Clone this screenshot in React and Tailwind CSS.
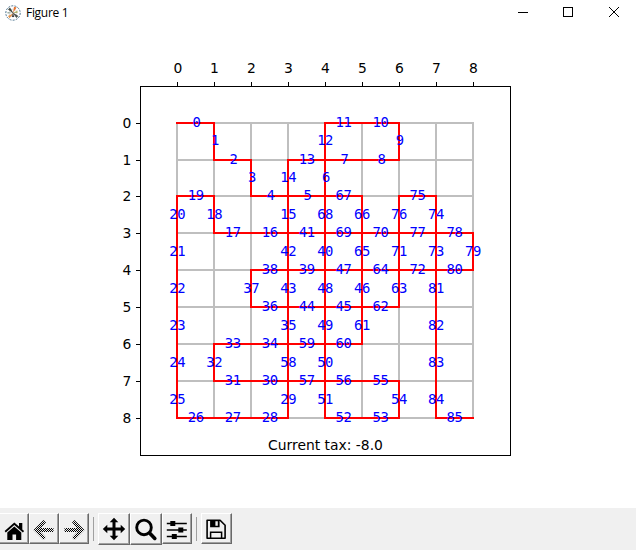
import React from "react";

const STEPS =
  "RDRDRRURRULLDLDDLLUL" + "DDDDDDRRRULLURRULURR" + "ULDDRRULDDDDRRULLLUR" + "RURULUULDRRDRUULDRRDLDDDDR";
const MOVES = { R: [1, 0], L: [-1, 0], U: [0, -1], D: [0, 1] };
const XS = [177, 214, 251, 288, 325, 362, 399, 436, 473];
const YS = [123, 160, 196, 233, 270, 307, 344, 381, 418];

const points = [[0, 0]];
for (const step of STEPS) {
  const [x, y] = points[points.length - 1];
  const [dx, dy] = MOVES[step];
  points.push([x + dx, y + dy]);
}

const labels = STEPS.split("").map((step, i) => {
  const [x1, y1] = points[i];
  const [x2, y2] = points[i + 1];
  const x = (i < 10 ? 178.1 : 177.3) + 18.48 * (x1 + x2);
  const y = y1 === y2 ? YS[y1] + 4 : Math.round(145 + 36.95 * Math.min(y1, y2));
  return { n: i, x, y };
});

function Plot() {
  return (
    <svg width="636" height="482" viewBox="0 26 636 482" className="block">
      <g stroke="#bfbfbf" strokeWidth="2" strokeLinecap="square" shapeRendering="crispEdges">
        {XS.map((x) => <line key={x} x1={x} x2={x} y1="123" y2="418" />)}
        {YS.map((y) => <line key={y} x1="177" x2="473" y1={y} y2={y} />)}
      </g>
      <polyline
        points={points.map(([x, y]) => `${XS[x]},${YS[y]}`).join(" ")}
        fill="none" stroke="#f00" strokeWidth="2" strokeLinecap="square" shapeRendering="crispEdges"
      />
      <rect x="140.5" y="86.5" width="370" height="369" fill="none" stroke="#000" shapeRendering="crispEdges" />
      <g stroke="#000" shapeRendering="crispEdges">
        {XS.map((x) => <line key={x} x1={x + 0.5} x2={x + 0.5} y1="82" y2="86" />)}
        {YS.map((y) => <line key={y} x1="136" x2="140" y1={y + 0.5} y2={y + 0.5} />)}
      </g>
      <g className="font-['DejaVu_Sans',sans-serif] text-[13.89px]" textAnchor="middle">
        {XS.map((x, i) => <text key={x} x={i === 0 ? x + 1 : x + 0.3} y="73">{i}</text>)}
        {YS.map((y, i) => <text key={y} x="127" y={y + 5}>{i}</text>)}
        <text x="325.5" y="450">Current tax: -8.0</text>
      </g>
      <g className="font-['DejaVu_Sans_Mono',monospace] text-[13.89px] tracking-[-0.36px]" textAnchor="middle" fill="#00f">
        {labels.map((l) => <text key={l.n} x={l.x} y={l.y}>{l.n}</text>)}
      </g>
    </svg>
  );
}

function Logo() {
  return (
    <svg width="16" height="16" viewBox="0 0 16 16">
      <circle cx="8" cy="8" r="7.2" fill="#fff" stroke="#4f7590" strokeWidth="1" strokeDasharray="2 1.2" />
      <circle cx="8" cy="8" r="4" fill="none" stroke="#c4c8ca" strokeWidth=".6" />
      <path d="M9 9 3 4.5l2-2z" fill="#444a42" />
      <path d="M8 8 9 1.8l2.6.8z" fill="#e7742f" />
      <path d="M7 7 13.4 11l-2 2z" fill="#4b524d" />
      <path d="M9 8 3 11l1.5 2.2z" fill="#e3924a" />
      <path d="M8 8 12.5 5.5V8z" fill="#b0b470" />
      <path d="M8 8 2.5 8.5V7z" fill="#90a496" />
      <path d="M8 7 7 12h2z" fill="#333" />
    </svg>
  );
}

function ToolButton({ size, children }) {
  return (
    <div className={`${size} flex shrink-0 items-center justify-center border border-t-white border-l-white border-r-[#696969] border-b-[#696969] bg-[#f0f0f0] shadow-[inset_-1px_-1px_0_#a0a0a0]`}>
      <svg width="24" height="24" viewBox="0 0 24 24" className="block shrink-0">{children}</svg>
    </div>
  );
}

const ARROW = "M11.5 3 14 5.5 8.8 11H21.5v4H8.8L14 20.5 11.5 23 1.5 13z";

export default function App() {
  return (
    <div className="flex h-[550px] w-[636px] flex-col overflow-hidden bg-white text-black">
      <header className="flex h-[26px] items-center pl-[5px]">
        <Logo />
        <span className="ml-[5px] flex-1 font-['Open_Sans',sans-serif] text-[12px] leading-[26px] tracking-[-0.3px]">Figure 1</span>
        <svg width="136" height="26" viewBox="0 0 136 26" fill="none" stroke="#000" shapeRendering="crispEdges">
          <path d="M18 12.5h10M63.5 7.5h9v9h-9z" />
          <path d="m109 7 10 10M119 7l-10 10" shapeRendering="auto" />
        </svg>
      </header>
      <Plot />
      <footer className="flex h-[42px] items-start bg-[#f0f0f0] pt-[5px]">
        <ToolButton size="-ml-[2px] h-[31px] w-[31px] pt-px">
          <g transform="translate(.3 1.6)">
            <path d="M2.3 12.4 12 4l4.7 4V4.5H20v6.4l1.8 1.6-1.2 1.3L12 6.5l-8.5 7.3z" />
            <path d="M5 13.8 12 8l7 5.8v7.5h-5.2v-5.4h-3.6v5.4H5z" />
          </g>
        </ToolButton>
        <ToolButton size="h-[31px] w-[30px] pt-px">
          <defs>
            <pattern id="checker" width="2" height="2" patternUnits="userSpaceOnUse">
              <path d="M0 0h1v1H0zM1 1h1v1H1z" shapeRendering="crispEdges" />
            </pattern>
          </defs>
          <path d={ARROW} fill="url(#checker)" />
        </ToolButton>
        <ToolButton size="h-[31px] w-[30px] pt-px">
          <path d={ARROW} fill="url(#checker)" transform="matrix(-1 0 0 1 24 0)" />
        </ToolButton>
        <div className="mt-1 mr-[4px] ml-[4px] h-6 w-px bg-[#a0a0a0]" />
        <ToolButton size="h-[32px] w-[32px]">
          <path d="m12 .8 4.3 4.5h-2.8v5.2h5.2V7.7l4.5 4.3-4.5 4.3v-2.8h-5.2v5.2h2.8L12 23.2l-4.3-4.5h2.8v-5.2H5.3v2.8L.8 12l4.5-4.3v2.8h5.2V5.3H7.7z" />
        </ToolButton>
        <ToolButton size="h-[32px] w-[32px]">
          <circle cx="10" cy="10.4" r="7.3" fill="none" stroke="#000" strokeWidth="2.9" />
          <path d="m15.8 16.2 5 5.2" stroke="#000" strokeWidth="3.6" strokeLinecap="round" />
        </ToolButton>
        <ToolButton size="h-[31px] w-[30px] pt-px">
          <g transform="translate(-.2 1)">
            <path d="M2 5.5h20M2 12h20M2 18.5h20" stroke="#000" strokeWidth="1.5" />
            <path d="M5.5 3h5v5h-5zM13.5 9.5h5v5h-5zM7 16h5v5H7z" />
          </g>
        </ToolButton>
        <div className="mt-1 mr-[4px] ml-[4px] h-6 w-px bg-[#a0a0a0]" />
        <ToolButton size="h-[31px] w-[31px] pt-px">
          <g transform="translate(-.9 .3)">
            <path d="M3 3h13l5 5v13H3z" fill="none" stroke="#000" strokeWidth="1.6" strokeLinejoin="round" />
            <path d="M6.5 21v-6h11v6" fill="none" stroke="#000" strokeWidth="1.5" />
            <path d="M6 3h9.5v7H6zM11.3 4v4.5h2.4V4z" fillRule="evenodd" />
          </g>
        </ToolButton>
      </footer>
    </div>
  );
}
